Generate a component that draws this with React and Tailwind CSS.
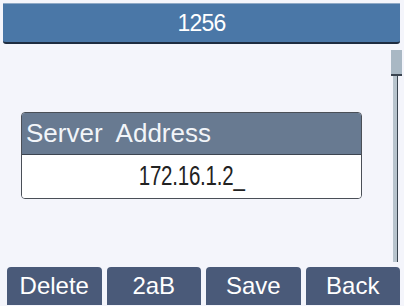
export default function App() {
  const keys = ['Delete', '2aB', 'Save', 'Back'];

  return (
    <div className="w-[404px] h-[306px] bg-[#f4f5fb] flex flex-col overflow-hidden font-['Liberation_Sans',Arial,sans-serif]">
      {/* Title bar */}
      <div className="ml-[3px] mr-[4px] mt-[3px] h-[41px] bg-[#4a77a7] border-t border-[#8fa9c6] border-b-2 border-b-[#1e2c40] rounded-b-[3px] flex items-center justify-center text-white text-[23px] tracking-[-0.8px]">
        1256
      </div>

      <div className="flex flex-1">
        {/* Dialog */}
        <div className="flex-1 pl-[21px] pt-[68px]">
          <div className="w-[341px] border border-[#4a4f57] rounded-[4px] overflow-hidden">
            <div className="h-[42px] bg-[#687a91] border-b border-[#3c4450] flex items-center pl-[4px] text-[26px] text-[#f2f5f9] whitespace-pre">
              Server  Address
            </div>
            <div className="h-[43px] bg-white flex items-center justify-center">
              <span className="inline-block text-[27px] text-[#222] scale-x-[0.76] tracking-[-0.3px]">172.16.1.2_</span>
            </div>
          </div>
        </div>

        {/* Scrollbar */}
        <div className="w-[12px] mr-[2px] pt-[6px] pb-[5px] flex flex-col">
          <div className="h-[26px] ml-[1px] bg-[#a9b8c4] border-b-2 border-[#3a4450]" />
          <div className="flex-1 ml-[3px] w-[5px] bg-[#b8c4cd] border-r border-[#3a4550]" />
        </div>
      </div>

      {/* Soft keys */}
      <div className="h-[38px] mb-[1px] pl-[7px] pr-[4px] flex gap-[5px]">
        {keys.map((k) => (
          <div
            key={k}
            className="flex-1 bg-[#4a5a79] rounded-t-[4px] flex items-center justify-center text-white text-[24px]"
          >
            {k}
          </div>
        ))}
      </div>
    </div>
  );
}
